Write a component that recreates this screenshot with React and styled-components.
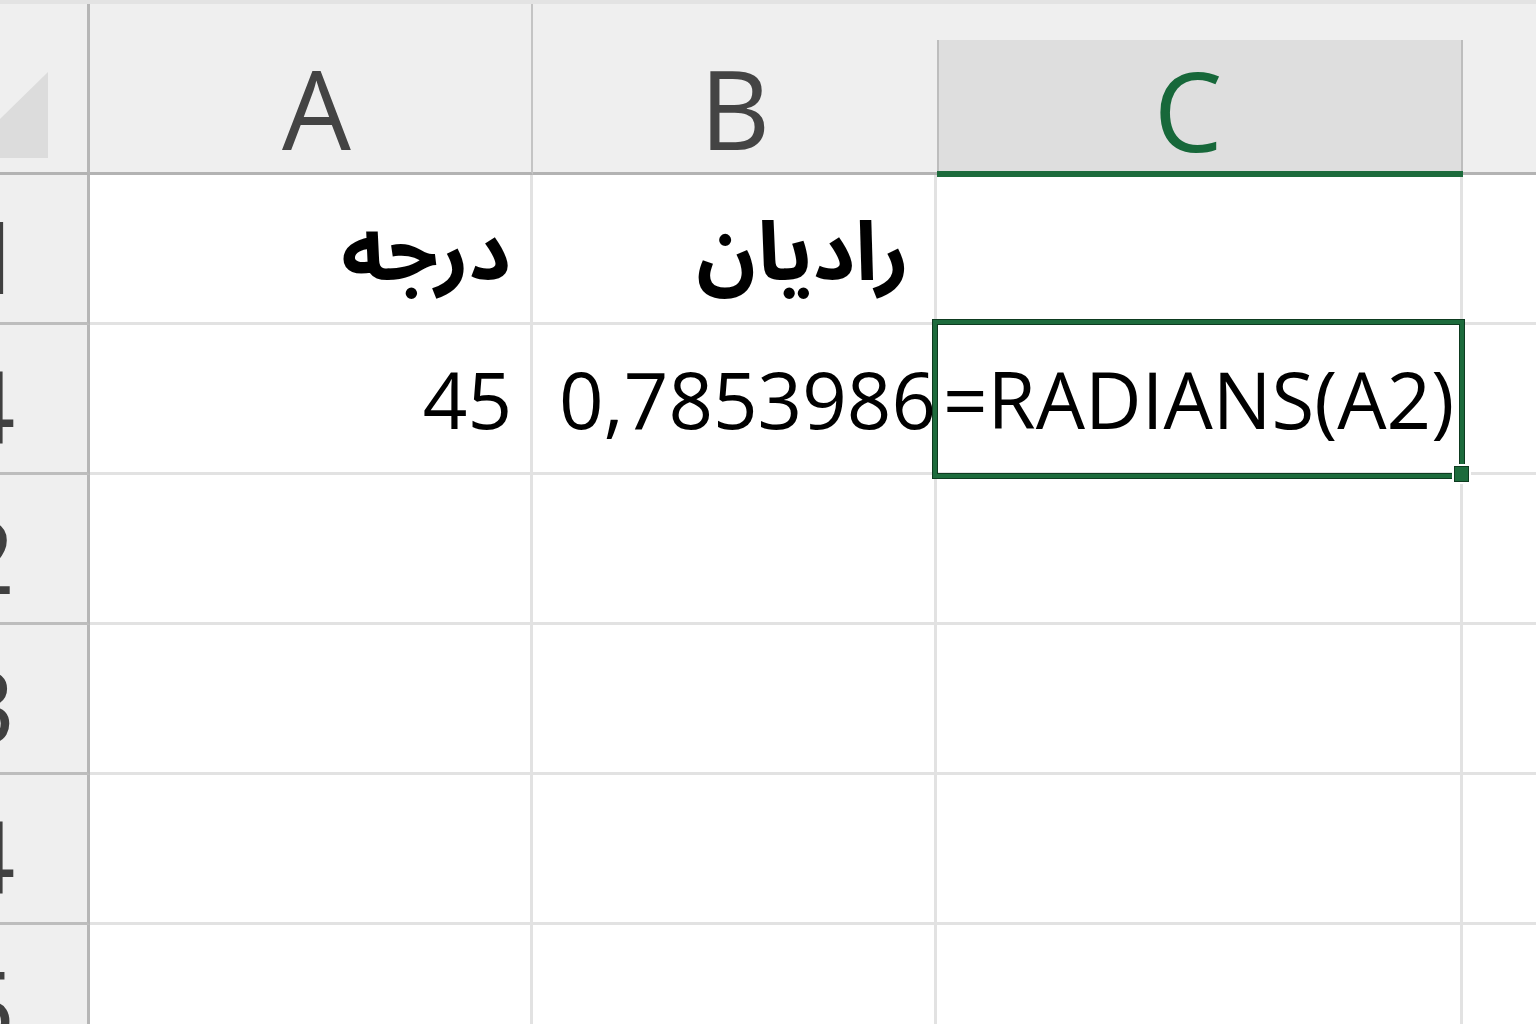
import React from "react";
import styled, { createGlobalStyle, css } from "styled-components";

const Global = createGlobalStyle`
  html, body { margin: 0; padding: 0; background: #ffffff; overflow: hidden; }
  #root { width: 1536px; height: 1024px; overflow: hidden; }
`;

const GREEN = "#1d6b3c";

const Sheet = styled.div`
  display: grid;
  grid-template-columns: 90px 443px 404px 526px 1fr;
  grid-template-rows: 171px repeat(6, 150px);
  border-top: 4px solid #e3e3e3;
  width: 1536px;
  height: 1020px;
  overflow: hidden;
  font-family: "Open Sans", "DejaVu Sans", sans-serif;
`;

const Corner = styled.div`
  background: #efefef;
  border-right: 3px solid #b6b6b6;
  border-bottom: 3px solid #b3b3b3;
  box-sizing: border-box;
  display: flex;
  align-items: flex-end;
  justify-content: flex-start;
  padding-bottom: 14px;
`;

const ColHeader = styled.div`
  background: #efefef;
  box-sizing: border-box;
  display: flex;
  flex-direction: column;
  padding-top: 36px;
  border-bottom: 3px solid #b3b3b3;
  ${(p) => p.$divider && css`border-right: 2px solid #c4c4c4;`}
  ${(p) =>
    p.$selected &&
    css`
      border-bottom: 6px solid ${GREEN};
      margin-bottom: -2px;
      position: relative;
      z-index: 2;
    `}
`;

const HeaderFace = styled.div`
  flex: 1;
  display: flex;
  align-items: flex-end;
  justify-content: center;
  padding-bottom: 10px;
  box-sizing: border-box;
  font-size: 109px;
  line-height: 1;
  color: #444444;
  ${(p) => p.$shift && css`padding-left: ${p.$shift}px;`}
  ${(p) =>
    p.$selected &&
    css`
      background: #dedede;
      color: #17683a;
      border-left: 2px solid #bdbdbd;
      border-right: 2px solid #bdbdbd;
      padding-bottom: 7px;
      padding-right: 24px;
    `}
`;

const RowHeader = styled.div`
  background: #efefef;
  border-right: 3px solid #b6b6b6;
  border-bottom: 3px solid #bdbdbd;
  box-sizing: border-box;
  overflow: hidden;
  display: flex;
  align-items: center;
  padding-top: 12px;
  font-size: 100px;
  line-height: 1;
  color: #404040;
`;

const RowLabel = styled.span`
  margin-left: ${(p) => p.$offset}px;
  white-space: nowrap;
`;

const Cell = styled.div`
  box-sizing: border-box;
  border-bottom: 3px solid #e2e2e2;
  ${(p) => !p.$last && css`border-right: 3px solid #e2e2e2;`}
  display: flex;
  align-items: center;
  justify-content: ${(p) => (p.$align === "right" ? "flex-end" : "flex-start")};
  padding: 0 ${(p) => p.$padR || 0}px 0 ${(p) => p.$padL || 0}px;
  white-space: nowrap;
  overflow: ${(p) => (p.$clip ? "hidden" : "visible")};
  position: ${(p) => (p.$selected ? "relative" : "static")};
  font-size: 78px;
  color: #000000;
`;

const Arabic = styled.span`
  font-family: "Noto Sans Arabic", "DejaVu Sans Condensed", "DejaVu Sans", sans-serif;
  font-weight: bold;
  font-size: 82px;
  line-height: 1.3;
  direction: rtl;
  padding-top: 12px;
`;

const Value = styled.span`
  position: relative;
  z-index: 1;
`;

const Selection = styled.div`
  position: absolute;
  left: -4px;
  top: -5px;
  right: -4px;
  bottom: -6px;
  border: 4px solid ${GREEN};
  box-shadow: 0 0 0 1px #0e3b20, inset 0 0 0 1px #0e3b20;
  z-index: 3;
  pointer-events: none;
`;

const FillHandle = styled.div`
  position: absolute;
  right: -8px;
  bottom: -7px;
  width: 13px;
  height: 14px;
  background: ${GREEN};
  box-shadow: 0 0 0 1px #0e3b20, 0 0 0 3px #ffffff;
`;

const SelectAll = () => (
  <svg width="48" height="86" viewBox="0 0 48 86" aria-hidden="true">
    <polygon points="0,47 48,0 48,86 0,86" fill="#dcdcdc" />
  </svg>
);

const columns = [
  { key: "A", divider: true, shift: 12 },
  { key: "B" },
  { key: "C", selected: true },
  { key: "D" },
];

const rows = [
  {
    label: "1",
    offset: -32,
    cells: [
      { text: "درجه", arabic: true, align: "right", padR: 19 },
      { text: "رادیان", arabic: true, align: "right", padR: 25 },
      {},
      {},
    ],
  },
  {
    label: "4",
    offset: -42,
    cells: [
      { text: "45", align: "right", padR: 18 },
      { text: "0,7853986", align: "left", padL: 26, clip: true },
      { text: "=RADIANS(A2)", align: "left", padL: 6, selected: true },
      {},
    ],
  },
  { label: "2", offset: -42, cells: [{}, {}, {}, {}] },
  { label: "3", offset: -42, cells: [{}, {}, {}, {}] },
  { label: "4", offset: -42, cells: [{}, {}, {}, {}] },
  { label: "5", offset: -42, cells: [{}, {}, {}, {}] },
];

export default function App() {
  return (
    <>
      <Global />
      <Sheet>
        <Corner>
          <SelectAll />
        </Corner>
        {columns.map((c) => (
          <ColHeader key={c.key} $divider={c.divider} $selected={c.selected}>
            {c.key !== "D" && (
              <HeaderFace $selected={c.selected} $shift={c.shift}>
                {c.key}
              </HeaderFace>
            )}
          </ColHeader>
        ))}
        {rows.map((r, ri) => (
          <React.Fragment key={ri}>
            <RowHeader>
              <RowLabel $offset={r.offset}>{r.label}</RowLabel>
            </RowHeader>
            {r.cells.map((cell, ci) => (
              <Cell
                key={ci}
                $align={cell.align}
                $padL={cell.padL}
                $padR={cell.padR}
                $selected={cell.selected}
                $clip={cell.clip}
                $last={ci === 3}
              >
                {cell.text &&
                  (cell.arabic ? (
                    <Arabic>{cell.text}</Arabic>
                  ) : (
                    <Value>{cell.text}</Value>
                  ))}
                {cell.selected && (
                  <Selection>
                    <FillHandle />
                  </Selection>
                )}
              </Cell>
            ))}
          </React.Fragment>
        ))}
      </Sheet>
    </>
  );
}
